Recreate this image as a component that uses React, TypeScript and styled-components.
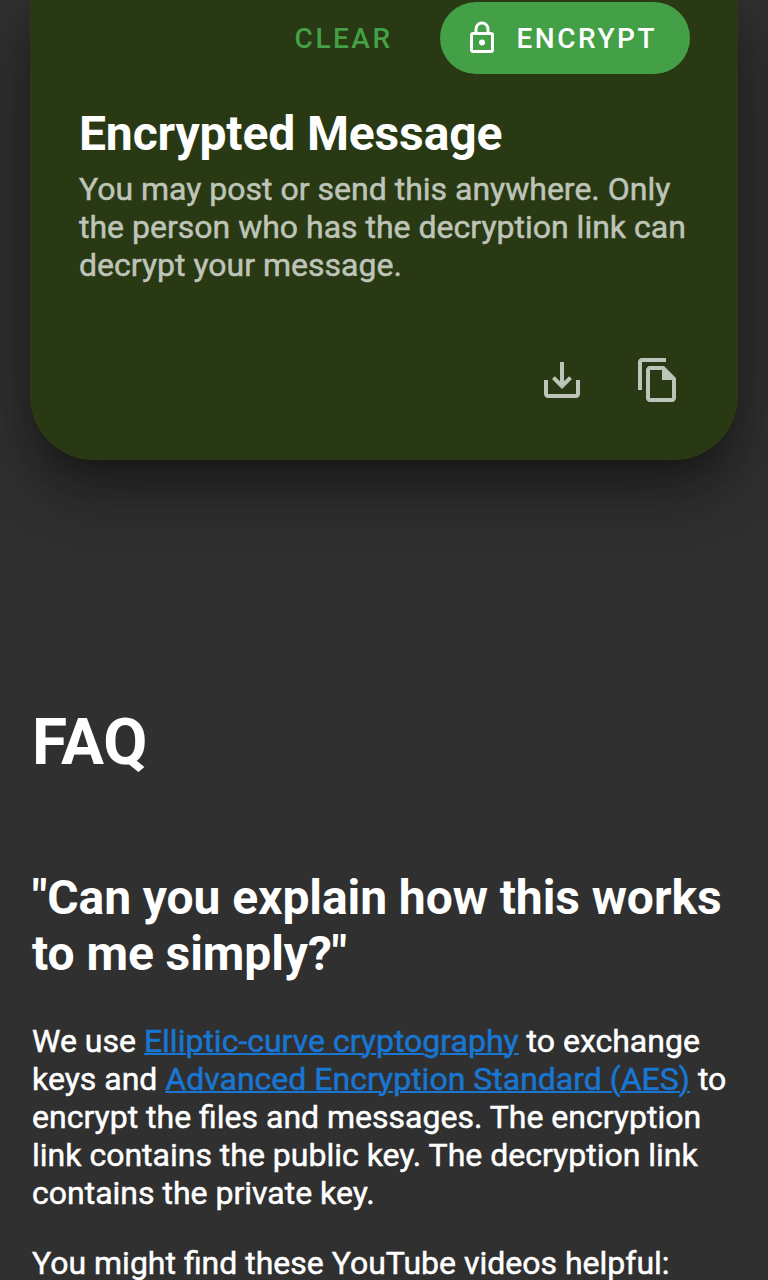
import React from "react";
import styled, { createGlobalStyle } from "styled-components";

const GlobalStyle = createGlobalStyle`
  html, body { margin: 0; background: #303030; }
  body {
    height: 1280px;
    overflow: hidden;
    color: #fff;
    font-family: Roboto, sans-serif;
    font-size: 32px;
    line-height: 38px;
    -webkit-text-stroke: 0.5px currentColor;
  }
`;

const Page = styled.main`
  height: 1280px;
  overflow: hidden;
`;

const Card = styled.section`
  box-sizing: border-box;
  height: 460px;
  margin: 0 30px;
  padding: 2px 48px 0 49px;
  border-radius: 0 0 64px 64px;
  background: #283913;
  box-shadow: 0 22px 30px -14px rgba(0, 0, 0, 0.3), 0 38px 66px 2px rgba(0, 0, 0, 0.23),
    0 16px 76px 8px rgba(0, 0, 0, 0.16);
`;

const FormActions = styled.div`
  display: flex;
  justify-content: flex-end;
  gap: 16px;
`;

const Button = styled.button<{ $filled?: boolean }>`
  display: flex;
  align-items: center;
  box-sizing: border-box;
  height: 72px;
  padding: ${(p) => (p.$filled ? "2px 33px 0 24px" : "2px 31px 0 32px")};
  border: 0;
  border-radius: 36px;
  background: ${(p) => (p.$filled ? "#43a047" : "transparent")};
  color: ${(p) => (p.$filled ? "#fff" : "#43a047")};
  font: 500 28px/70px Roboto, sans-serif;
  letter-spacing: 2.5px;
  -webkit-text-stroke: 0;
`;

const LockIcon = styled.svg`
  width: 36px;
  height: 36px;
  margin: -2px 17px 0 0;
`;

const CardTitle = styled.h2`
  margin: 32px 0 0;
  font-size: 48px;
  line-height: 56px;
  font-weight: 700;
  letter-spacing: -0.13px;
  -webkit-text-stroke: 0;
`;

const CardText = styled.p`
  margin: 8px 0 0;
  color: #bfc4b9;
`;

const ResultActions = styled.div`
  display: flex;
  justify-content: flex-end;
  gap: 48px;
  margin: 72px 8px 0 0;
`;

const ActionIcon = styled.svg`
  width: 48px;
  height: 48px;
  fill: #bfc4b9;
`;

const Faq = styled.section`
  padding: 245px 32px 0;
`;

const FaqTitle = styled.h1`
  margin: 0;
  font-size: 64px;
  line-height: 76px;
  font-weight: 700;
  letter-spacing: -0.3px;
  -webkit-text-stroke: 0;
`;

const Question = styled.h2`
  margin: 89px 0 0;
  font-size: 48px;
  line-height: 56px;
  font-weight: 700;
  letter-spacing: -0.08px;
  -webkit-text-stroke: 0;
`;

const Answer = styled.p`
  margin: 40px 0 0;

  & + & { margin-top: 32px; }
`;

const Link = styled.a`
  color: #1976d2;
  text-decoration: underline;
  text-decoration-thickness: 2px;
`;

export default function App() {
  return (
    <Page>
      <GlobalStyle />
      <Card>
        <FormActions>
          <Button>CLEAR</Button>
          <Button $filled>
            <LockIcon viewBox="0 0 24 24" fill="currentColor">
              <path d="M12,17C10.890,17 10,16.100 10,15C10,13.890 10.890,13 12,13A2,2 0 0,1 14,15A2,2 0 0,1 12,17M18,20V10H6V20H18M18,8A2,2 0 0,1 20,10V20A2,2 0 0,1 18,22H6C4.890,22 4,21.100 4,20V10C4,8.890 4.890,8 6,8H7V6A5,5 0 0,1 12,1A5,5 0 0,1 17,6V8H18M12,3A3,3 0 0,0 9,6V8H15V6A3,3 0 0,0 12,3Z" />
            </LockIcon>
            ENCRYPT
          </Button>
        </FormActions>
        <CardTitle>Encrypted Message</CardTitle>
        <CardText>
          You may post or send this anywhere. Only the person who has the decryption link can decrypt your message.
        </CardText>
        <ResultActions>
          <ActionIcon viewBox="0 0 24 24">
            <path d="M19 12v7H5v-7H3v7c0 1.100.9 2 2 2h14c1.100 0 2-.9 2-2v-7h-2zm-6 .67 2.590-2.580L17 11.500l-5 5-5-5 1.410-1.410L11 12.670V3h2v9.670z" />
          </ActionIcon>
          <ActionIcon viewBox="0 0 24 24">
            <path d="M16 1H4c-1.100 0-2 .9-2 2v14h2V3h12V1zm-1 4H8c-1.100 0-1.990.9-1.990 2L6 21c0 1.100.89 2 1.990 2H19c1.100 0 2-.9 2-2V11l-6-6zM8 21V7h6v5h5v9H8z" />
          </ActionIcon>
        </ResultActions>
      </Card>
      <Faq>
        <FaqTitle>FAQ</FaqTitle>
        <Question>"Can you explain how this works to me simply?"</Question>
        <Answer>
          We use <Link>Elliptic-curve cryptography</Link> to exchange keys and{" "}
          <Link>Advanced Encryption Standard (AES)</Link> to encrypt the files and messages. The encryption link
          contains the public key. The decryption link contains the private key.
        </Answer>
        <Answer>You might find these YouTube videos helpful:</Answer>
      </Faq>
    </Page>
  );
}
